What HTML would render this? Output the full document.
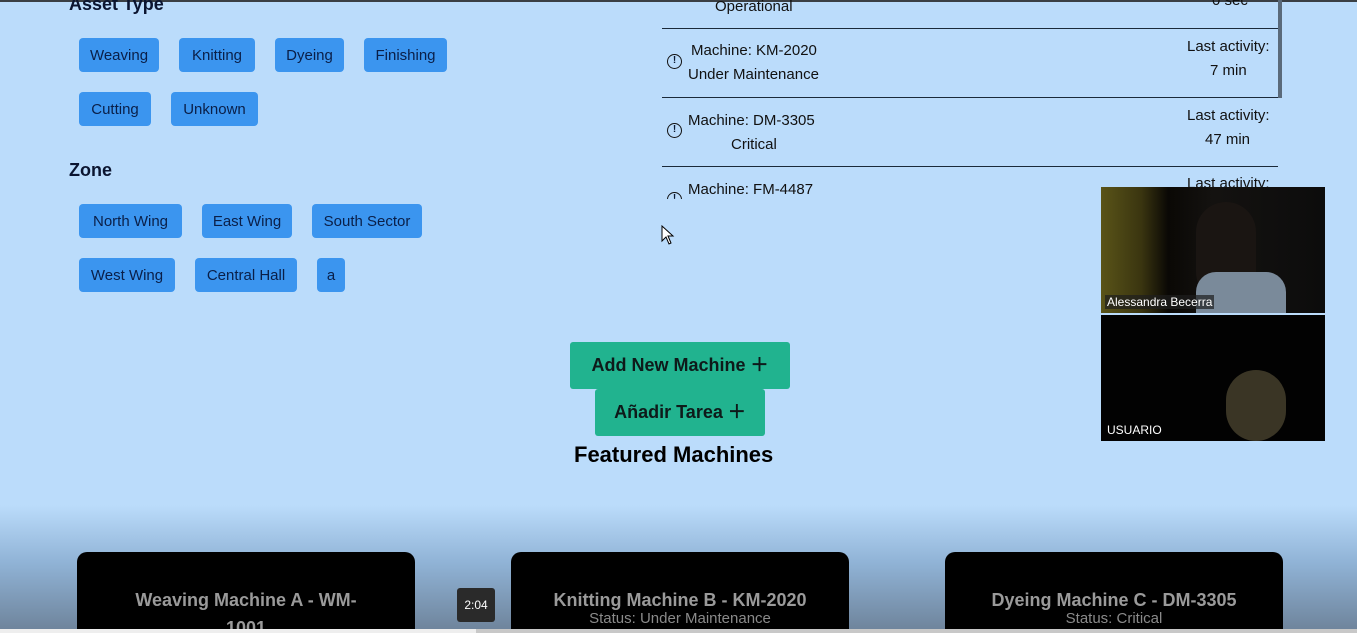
<!DOCTYPE html>
<html style="width:1357px;height:633px;overflow:hidden"><head><meta charset="utf-8"><style>
*{margin:0;padding:0;box-sizing:border-box}
body{width:1357px;height:633px;overflow:hidden;position:relative;background:#bbdcfb;font-family:"Liberation Sans",sans-serif;color:#0b1a33}
.topbar{position:absolute;left:0;top:0;width:1357px;height:2px;background:#3a3f44}
.h{position:absolute;font-weight:bold;font-size:18px;color:#0b1530}
.chip{position:absolute;height:34px;background:#3b95ef;border-radius:4px;font-size:15px;line-height:36px;text-align:center;color:#0a1f48}
.row{position:absolute;left:662px;width:616px;border-top:1.5px solid #1a2a3a}
.t{position:absolute;font-size:15px;color:#111;white-space:nowrap}
.ic{position:absolute;width:15px;height:15px;border:1.6px solid #111;border-radius:50%;font-size:10px;line-height:12px;text-align:center;font-weight:bold}
.btn{position:absolute;background:#21b38f;border-radius:3px;font-weight:bold;font-size:18px;color:#0e1a1a;text-align:center}
.grad{position:absolute;left:0;top:505px;width:1357px;height:128px;background:linear-gradient(#bbdcfb,#90b3d6 45%,#6d8299)}
.card{position:absolute;top:552px;width:338px;height:81px;overflow:hidden;background:#000;border-radius:10px 10px 0 0;text-align:center;color:#9a9a9a}
.card .ti{font-weight:bold;font-size:18px;margin-top:34px;line-height:28px}
.card .st{font-size:15px;color:#8a8a8a;margin-top:-4px}
.vid{position:absolute;left:1101px;width:224px;height:126px;background:#020202;overflow:hidden}
.vid span{position:absolute;left:4px;bottom:4px;font-size:12px;color:#fff;background:rgba(30,30,30,.7);padding:0 2px}
</style></head><body>
<div class="topbar"></div>
<div class="h" style="left:69px;top:-6px">Asset Type</div>
<div class="chip" style="left:79px;top:38px;width:80px">Weaving</div>
<div class="chip" style="left:179px;top:38px;width:76px">Knitting</div>
<div class="chip" style="left:275px;top:38px;width:69px">Dyeing</div>
<div class="chip" style="left:364px;top:38px;width:83px">Finishing</div>
<div class="chip" style="left:79px;top:92px;width:72px">Cutting</div>
<div class="chip" style="left:171px;top:92px;width:87px">Unknown</div>
<div class="h" style="left:69px;top:160px">Zone</div>
<div class="chip" style="left:79px;top:204px;width:103px">North Wing</div>
<div class="chip" style="left:202px;top:204px;width:90px">East Wing</div>
<div class="chip" style="left:312px;top:204px;width:110px">South Sector</div>
<div class="chip" style="left:79px;top:258px;width:96px">West Wing</div>
<div class="chip" style="left:195px;top:258px;width:102px">Central Hall</div>
<div class="chip" style="left:317px;top:258px;width:28px">a</div>

<div style="position:absolute;left:1278px;top:0;width:4px;height:98px;background:#5a6a7a"></div>
<div class="t" style="left:715px;top:-2px">Operational</div>
<div class="t" style="left:1212px;top:-8px">0 sec</div>
<div class="row" style="top:28px"></div>
<div class="ic" style="left:667px;top:54px">!</div>
<div class="t" style="left:691px;top:42px">Machine: KM-2020</div>
<div class="t" style="left:688px;top:66px">Under Maintenance</div>
<div class="t" style="left:1187px;top:38px">Last activity:</div>
<div class="t" style="left:1210px;top:62px">7 min</div>
<div class="row" style="top:97px"></div>
<div class="ic" style="left:667px;top:123px">!</div>
<div class="t" style="left:688px;top:112px">Machine: DM-3305</div>
<div class="t" style="left:731px;top:136px">Critical</div>
<div class="t" style="left:1187px;top:107px">Last activity:</div>
<div class="t" style="left:1205px;top:131px">47 min</div>
<div class="row" style="top:166px"></div>
<div style="position:absolute;left:662px;top:168px;width:616px;height:31px;overflow:hidden">
<div class="ic" style="left:5px;top:24px">!</div>
<div class="t" style="left:26px;top:13px">Machine: FM-4487</div>
<div class="t" style="left:525px;top:7px">Last activity:</div>
</div>
<svg style="position:absolute;left:661px;top:225px" width="14" height="20"><path d="M1 1 L1 16 L5 12 L8 19 L10 18 L7 11 L12 11 Z" fill="#fff" stroke="#000" stroke-width="1"/></svg>

<div class="btn" style="left:570px;top:342px;width:220px;height:47px;line-height:47px">Add New Machine ＋</div>
<div class="btn" style="left:595px;top:389px;width:170px;height:47px;line-height:47px">Añadir Tarea ＋</div>
<div class="h" style="left:574px;top:442px;font-size:22px;color:#000">Featured Machines</div>

<div class="vid" style="top:187px;background:linear-gradient(90deg,#5a5418 0%,#3a3510 18%,#0a0805 30%,#141210 50%,#0c0c0c 100%)"><div style="position:absolute;left:95px;top:15px;width:60px;height:100px;border-radius:30px;background:#1a1512"></div><div style="position:absolute;left:95px;top:85px;width:90px;height:41px;background:#7a8a9a;border-radius:20px 20px 0 0"></div><span>Alessandra Becerra</span></div>
<div class="vid" style="top:315px"><div style="position:absolute;left:125px;top:55px;width:60px;height:71px;border-radius:30px;background:#3a3525"></div><span style="background:none">USUARIO</span></div>

<div class="grad"></div>
<div class="card" style="left:77px"><div class="ti">Weaving Machine A - WM-<br>1001</div></div>
<div class="card" style="left:511px"><div class="ti">Knitting Machine B - KM-2020</div><div class="st">Status: Under Maintenance</div></div>
<div class="card" style="left:945px"><div class="ti">Dyeing Machine C - DM-3305</div><div class="st">Status: Critical</div></div>
<div style="position:absolute;left:457px;top:588px;width:38px;height:34px;background:#2a2a2a;border-radius:3px;color:#fff;font-size:12px;line-height:34px;text-align:center">2:04</div>
<div style="position:absolute;left:0;top:629px;width:1357px;height:4px;background:#c8c8c8"></div>
<div style="position:absolute;left:0;top:629px;width:476px;height:4px;background:#eee"></div>
</body></html>
